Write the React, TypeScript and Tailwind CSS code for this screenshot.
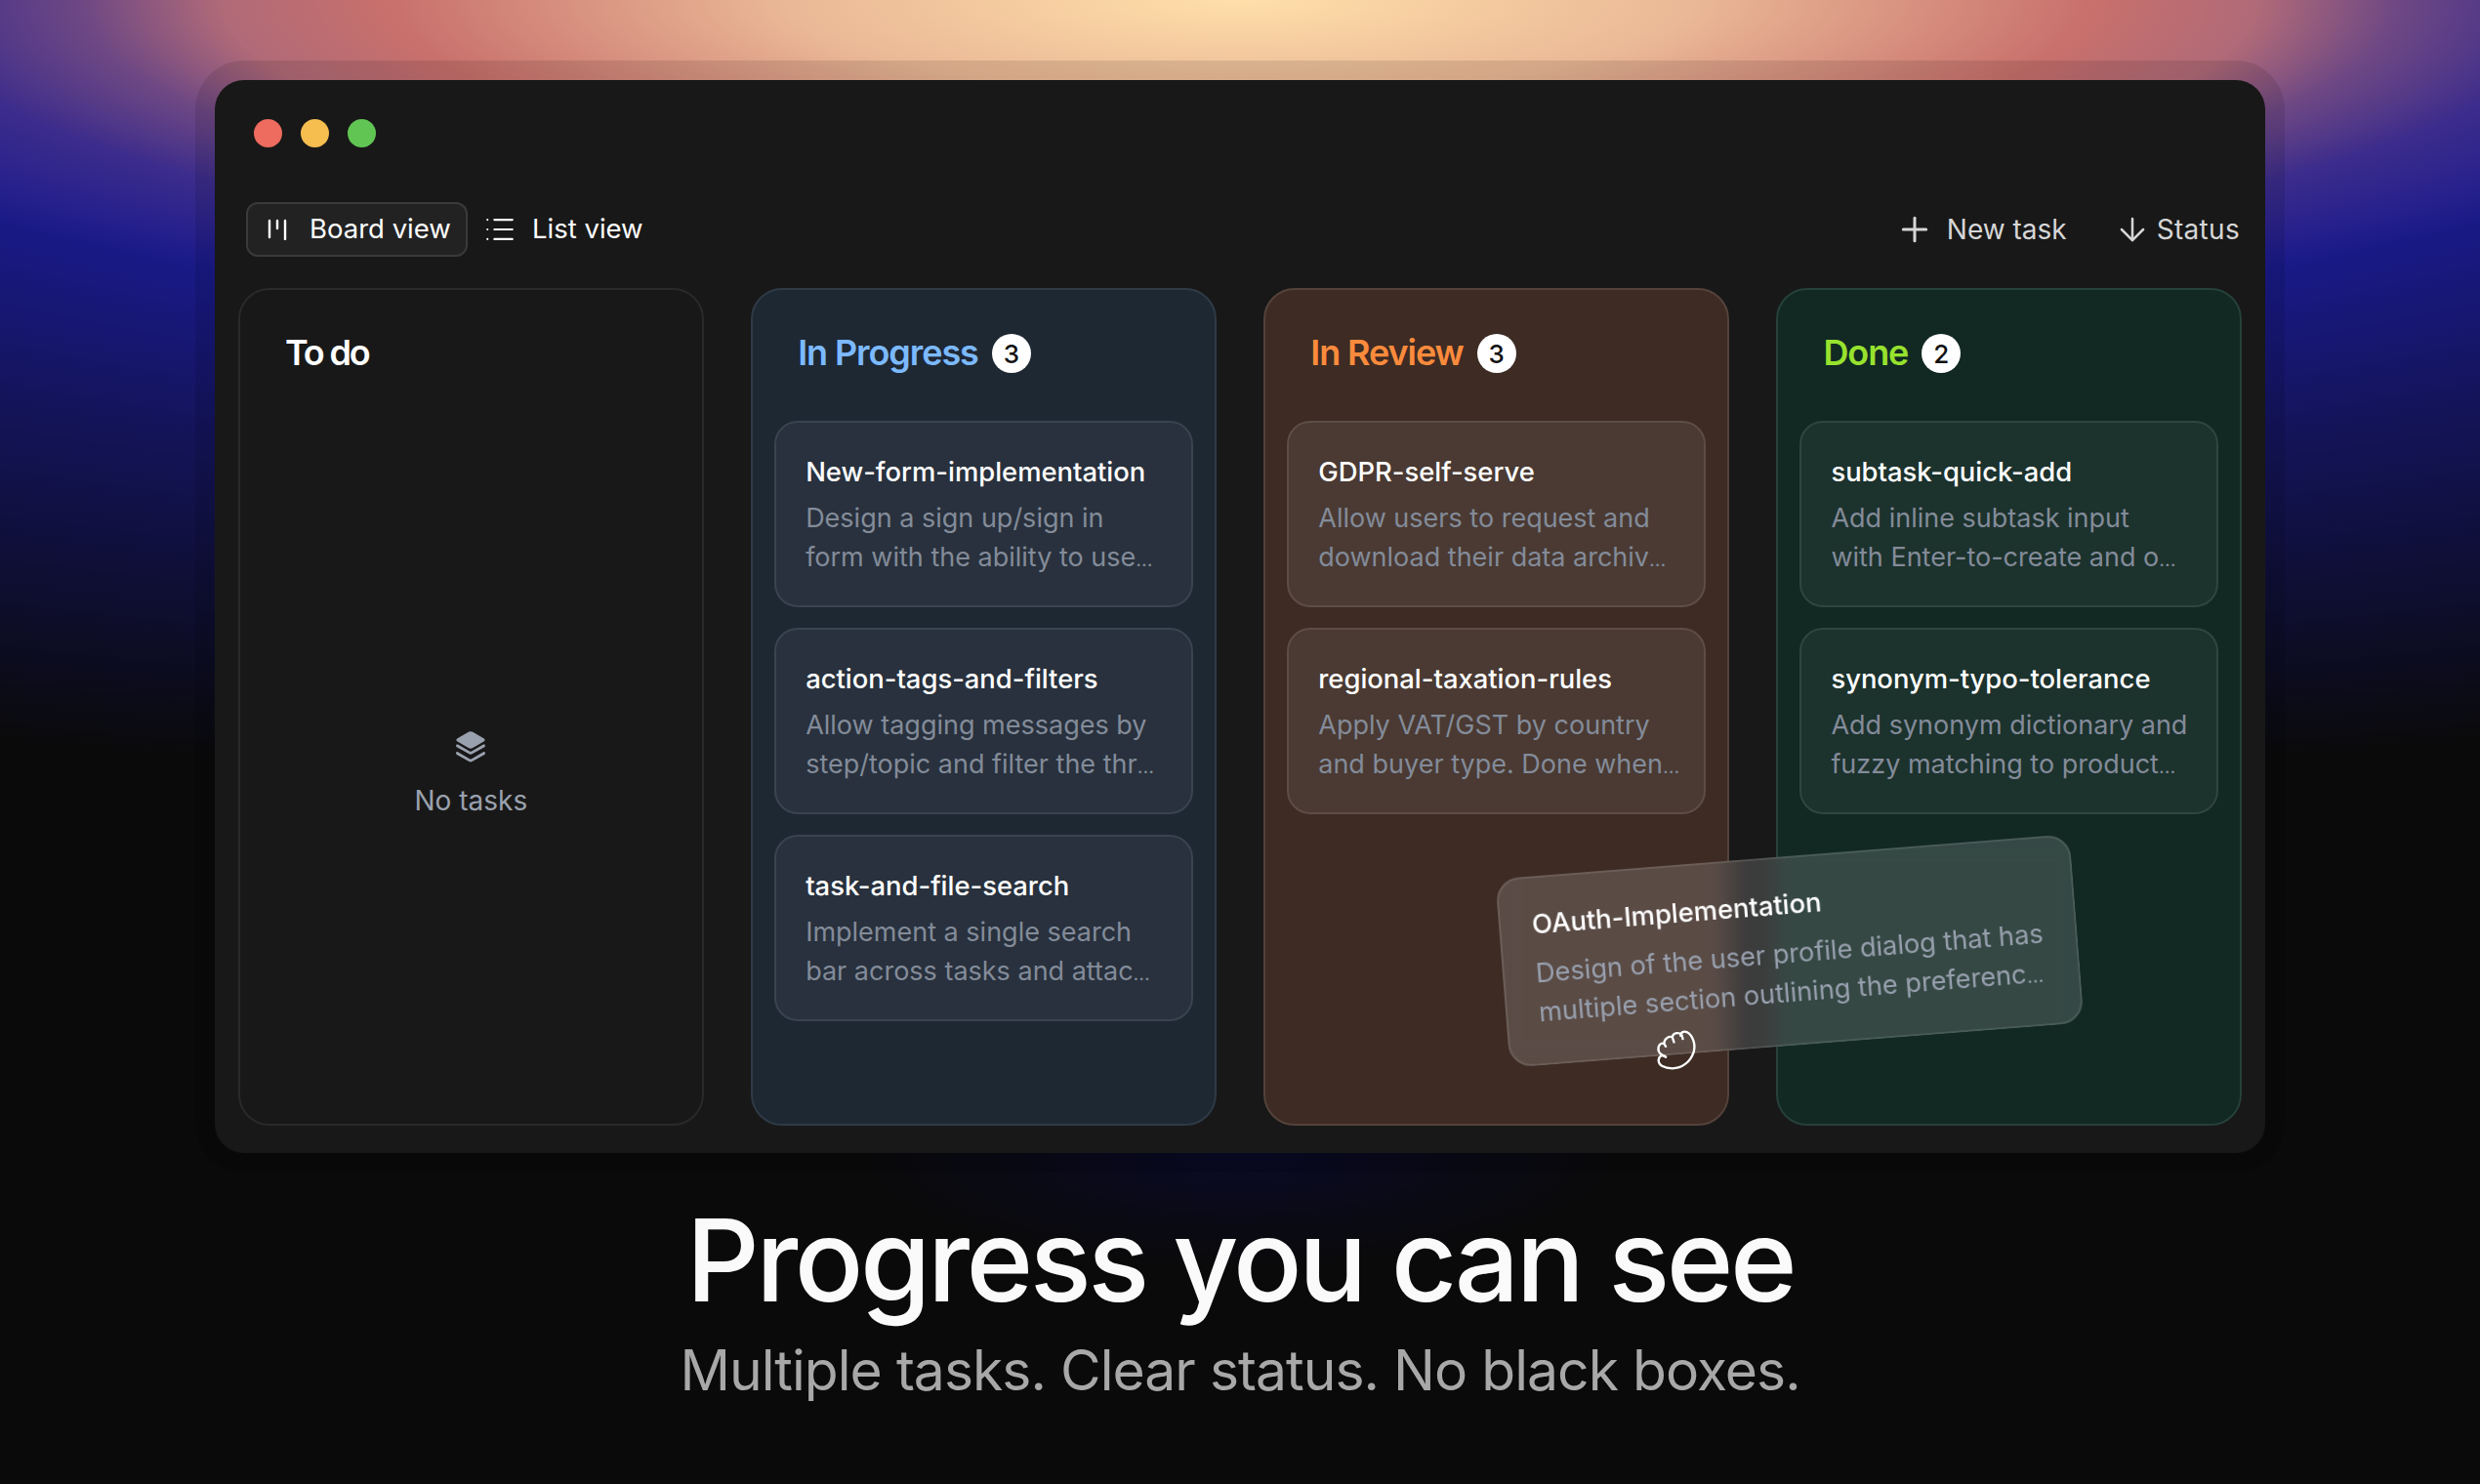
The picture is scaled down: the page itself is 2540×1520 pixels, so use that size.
import React from 'react';
import { ArrowDown, List, Plus } from 'lucide-react';

type Task = { title: string; lines: [string, string] };

type Column = {
  name: string;
  count?: number;
  colClass: string;
  cardClass: string;
  titleClass: string;
  tasks: Task[];
};

const columns: Column[] = [
  {
    name: 'To do',
    colClass: 'bg-[#181818] border-[#2a2a2a]',
    cardClass: '',
    titleClass: 'text-white tracking-[-0.06em]',
    tasks: [],
  },
  {
    name: 'In Progress',
    count: 3,
    colClass: 'bg-[#1e2833] border-[#2f3a47]',
    cardClass: 'bg-[#28313d] border-[#3a4350]',
    titleClass: 'text-[#7cb9ff] tracking-[-0.03em]',
    tasks: [
      { title: 'New-form-implementation', lines: ['Design a sign up/sign in', 'form with the ability to use'] },
      { title: 'action-tags-and-filters', lines: ['Allow tagging messages by', 'step/topic and filter the thr'] },
      { title: 'task-and-file-search', lines: ['Implement a single search', 'bar across tasks and attac'] },
    ],
  },
  {
    name: 'In Review',
    count: 3,
    colClass: 'bg-[#3d2b24] border-[#54423b]',
    cardClass: 'bg-[#4a3a33] border-[#5d4d46]',
    titleClass: 'text-[#fb8b3c] tracking-[-0.03em]',
    tasks: [
      { title: 'GDPR-self-serve', lines: ['Allow users to request and', 'download their data archiv'] },
      { title: 'regional-taxation-rules', lines: ['Apply VAT/GST by country', 'and buyer type. Done when'] },
    ],
  },
  {
    name: 'Done',
    count: 2,
    colClass: 'bg-[#112823] border-[#26403a]',
    cardClass: 'bg-[#1c322d] border-[#2f4540]',
    titleClass: 'text-[#97e22e] tracking-[-0.03em]',
    tasks: [
      { title: 'subtask-quick-add', lines: ['Add inline subtask input', 'with Enter-to-create and o'] },
      { title: 'synonym-typo-tolerance', lines: ['Add synonym dictionary and', 'fuzzy matching to product'] },
    ],
  },
];

const BoardIcon = () => (
  <svg width="20" height="22" viewBox="0 0 20 22" fill="none" stroke="currentColor" strokeWidth="2.4" strokeLinecap="round">
    <path d="M2 2v17" />
    <path d="M10 2v8" />
    <path d="M18 2v19" />
  </svg>
);

const LayersIcon = () => (
  <svg width="30" height="32" viewBox="0 0 30 32" fill="#9aa1ae">
    <path d="M13.2 0.6a4 4 0 0 1 3.6 0l11.6 6.7c1.6.9 1.6 2.4 0 3.3l-11.6 6.7a4 4 0 0 1-3.6 0L1.6 10.6c-1.6-.9-1.6-2.4 0-3.3z" />
    <path d="M2 13.6l12 6.9a2 2 0 0 0 2 0l12-6.9c1-.6 2 .2 2 1.2 0 .6-.3 1.1-.8 1.4L17 23.1a4 4 0 0 1-4 0L.8 16.2c-.5-.3-.8-.8-.8-1.4 0-1 1-1.8 2-1.2z" />
    <path d="M2 21.3l12 6.9a2 2 0 0 0 2 0l12-6.9c1-.6 2 .2 2 1.2 0 .6-.3 1.1-.8 1.4L17 30.8a4 4 0 0 1-4 0L.8 23.9c-.5-.3-.8-.8-.8-1.4 0-1 1-1.8 2-1.2z" />
  </svg>
);

// closed-hand cursor shown while dragging
const GrabHand = () => (
  <svg width="42" height="42" viewBox="110 78 125 125" fill="none" stroke="white" strokeWidth="7" strokeLinecap="round" strokeLinejoin="round">
    <path d="M140 160C128 150 120 158 118 170C118 185 135 195 160 195C190 195 215 175 225 145C232 120 222 95 205 85C195 80 185 85 185 95" />
    <path d="M118 140C115 125 125 115 135 120L140 128" />
    <path d="M135 118C135 105 150 95 160 100L165 115" />
    <path d="M160 98C165 85 180 85 188 92L192 105" />
    <path d="M118 140C118 148 128 155 140 160" />
  </svg>
);

// the reference's ellipsis is tighter than Inter's
const Dots = () => <span className="text-[20px] leading-none">…</span>;

const TaskCard = ({ task, className }: { task: Task; className: string }) => (
  <div className={`rounded-3xl border-2 px-[30px] pt-[33px] pb-[29px] ${className}`}>
    <div className="text-[27.4px] leading-[34px] font-medium text-white whitespace-nowrap">{task.title}</div>
    <div className="mt-[11px] text-[27px] leading-10 text-[#838b99] whitespace-nowrap">
      <div>{task.lines[0]}</div>
      <div>
        {task.lines[1]}
        <Dots />
      </div>
    </div>
  </div>
);

const BoardColumn = ({ col }: { col: Column }) => (
  <div className={`flex flex-col rounded-[32px] border-2 px-[22px] ${col.colClass}`}>
    <div className="flex h-10 mt-[45px] mb-[49px] ml-6 items-center gap-[14px]">
      <span className={`text-[36px] -translate-y-[1px] font-semibold ${col.titleClass}`}>{col.name}</span>
      {col.count !== undefined && (
        <span className="flex h-10 w-10 items-center justify-center rounded-full bg-white text-[26px] font-medium text-[#111]">
          {col.count}
        </span>
      )}
    </div>
    {col.tasks.length > 0 ? (
      <div className="flex flex-col gap-[21px]">
        {col.tasks.map((t) => (
          <TaskCard key={t.title} task={t} className={col.cardClass} />
        ))}
      </div>
    ) : (
      <div className="flex flex-1 flex-col items-center justify-center gap-[21px] pt-1">
        <LayersIcon />
        <span className="text-[28px] leading-9 text-[#9aa1ae]">No tasks</span>
      </div>
    )}
  </div>
);

const App: React.FC = () => {
  return (
    <div className="relative w-[2540px] h-[1520px] overflow-hidden bg-[#0a0a0a] font-['Inter',sans-serif] bg-[radial-gradient(1409px_300px_at_50%_0,#ffdfaa_0%,#eab896_33%,#c8706c_62%,#b06a78_74%,rgba(125,80,130,0.85)_84%,rgba(90,60,140,0.5)_97%,rgba(60,40,140,0)_118%),radial-gradient(1500px_360px_at_50%_0,#1e1c8c_0%,#1e1c8c_85%,#1a1a8c_100%,#14145c_140%,#0e0e30_187%,#0a0a0a_228%)]">
      {/* faint glow under the window */}
      <div className="absolute left-[870px] top-[1061px] w-[800px] h-[240px] bg-[radial-gradient(closest-side,#0a0a26,transparent)]" />

      <div className="relative mx-auto mt-[62px] w-[2140px] rounded-[50px] bg-black/10 p-5">
        <div className="relative h-[1099px] rounded-[30px] bg-[#181818] pt-10">
          {/* Title bar */}
          <div className="flex gap-[19px] pl-10">
            <span className="h-[29px] w-[29px] rounded-full bg-[#ee6b5f]" />
            <span className="h-[29px] w-[29px] rounded-full bg-[#f5be4f]" />
            <span className="h-[29px] w-[29px] rounded-full bg-[#61c554]" />
          </div>

          {/* Toolbar */}
          <div className="mt-14 flex h-14 items-center justify-between pl-8 pr-[26px] text-[28px]">
            <div className="flex items-center gap-[16px] text-[27.5px]">
              <div className="flex h-14 w-[227px] items-center gap-[23px] rounded-xl border-2 border-[#3a3a3a] bg-[#222] pl-[20px] text-white">
                <BoardIcon />
                <span>Board view</span>
              </div>
              <div className="flex items-center gap-[16px] text-white">
                <List size={34} strokeWidth={1.5} />
                <span>List view</span>
              </div>
            </div>
            <div className="flex items-center gap-[48px] text-[#d6d6d6]">
              <div className="flex items-center gap-[13px]">
                <Plus size={40} strokeWidth={1.8} />
                <span>New task</span>
              </div>
              <div className="flex items-center gap-[6px]">
                <ArrowDown size={38} strokeWidth={1.6} />
                <span className="tracking-[0.3px]">Status</span>
              </div>
            </div>
          </div>

          {/* Board */}
          <div className="mt-8 grid h-[858px] grid-cols-4 gap-[48.5px] pl-6 pr-6">
            {columns.map((c) => (
              <BoardColumn key={c.name} col={c} />
            ))}
          </div>

          {/* Card being dragged */}
          <div className="absolute left-[1318px] top-[795px] w-[590px] h-[194px] -rotate-[4.5deg] rounded-3xl border-2 border-white/10 bg-white/15 backdrop-blur-md px-8 pt-[30px]">
            <div className="text-[27.4px] leading-[34px] font-medium text-white whitespace-nowrap">OAuth-Implementation</div>
            <div className="mt-[14px] text-[27.2px] leading-10 text-[#98a0ae] whitespace-nowrap">
              <div>Design of the user profile dialog that has</div>
              <div>
                multiple section outlining the preferenc
                <Dots />
              </div>
            </div>
          </div>
          <div className="absolute left-[1476px] top-[973px]">
            <GrabHand />
          </div>
        </div>
      </div>

      {/* Headline */}
      <div className="relative mt-[25px] flex flex-col items-center">
        <h1 className="text-[117px] leading-[130px] font-medium tracking-[-0.03em] text-[#fafafa]">Progress you can see</h1>
        <p className="mt-3 text-[57px] leading-[72px] tracking-[-0.017em] text-[#a8a8a8]">Multiple tasks. Clear status. No black boxes.</p>
      </div>
    </div>
  );
};

export default App;
